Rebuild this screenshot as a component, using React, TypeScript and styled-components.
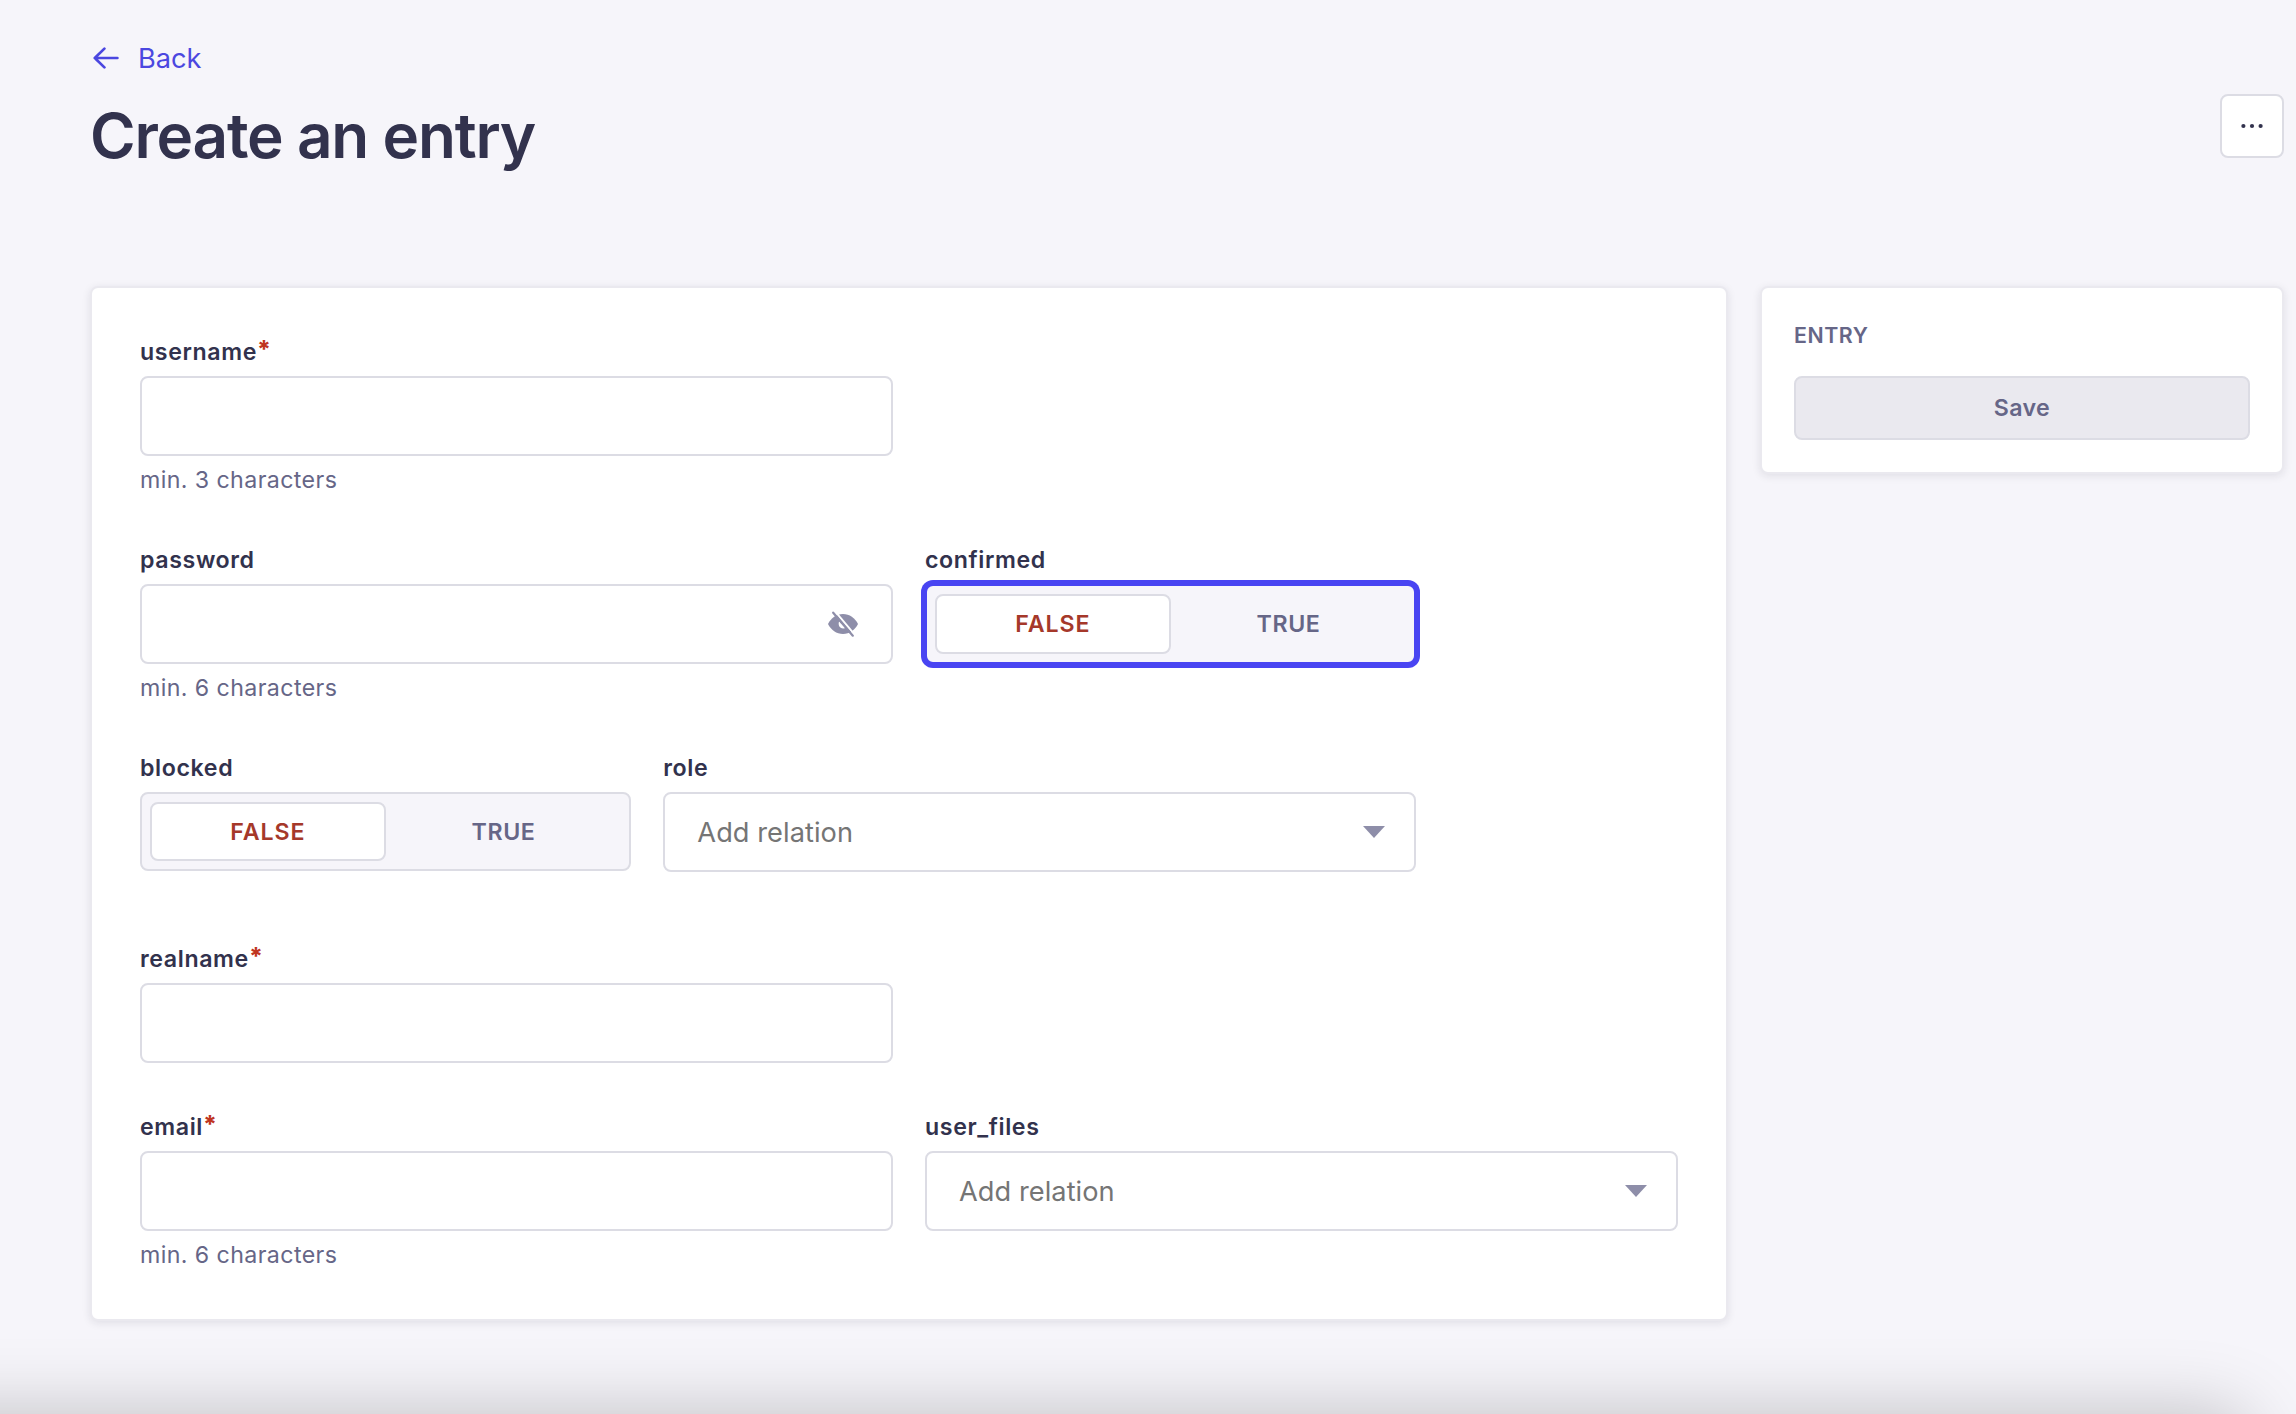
import React from "react";
import styled, { createGlobalStyle, css } from "styled-components";

const color = {
  page: "#f6f5fa",
  white: "#ffffff",
  line: "#dcdce4",
  soft: "#eae9ef",
  ink: "#32324d",
  muted: "#666687",
  icon: "#8e8ea9",
  placeholder: "#757575",
  primary: "#4945f2",
  link: "#4b47e0",
  danger: "#c0351f",
  dangerDeep: "#a5382a",
};

const GlobalStyle = createGlobalStyle`
  *, *::before, *::after { box-sizing: border-box; }
  body { margin: 0; background: ${color.page}; }
`;

const Page = styled.div`
  position: relative;
  width: 100%;
  height: 1414px;
  overflow: hidden;
  padding: 38px 12px 0 90px;
  background: ${color.page};
  color: ${color.ink};
  font-family: Inter, "Liberation Sans", sans-serif;
`;

const BackLink = styled.a`
  display: flex;
  align-items: center;
  width: fit-content;
  height: 40px;
  padding-left: 3px;
  gap: 19px;
  color: ${color.link};
  font-size: 27.2px;
  line-height: 40px;
  svg { display: block; }
  span { padding-top: 1px; }
`;

const TitleRow = styled.header`
  display: flex;
  align-items: flex-start;
  justify-content: space-between;
  height: 82px;
  margin-top: 16px;
`;

const Title = styled.h1`
  margin: 0;
  font-size: 62px;
  font-weight: 600;
  line-height: 84px;
  letter-spacing: -1.2px;
`;

const MoreButton = styled.button`
  display: flex;
  align-items: center;
  justify-content: center;
  width: 64px;
  height: 64px;
  padding: 0;
  border: 2px solid ${color.line};
  border-radius: 8px;
  background: ${color.white};
`;

const Content = styled.main`
  display: grid;
  grid-template-columns: 1638px 524px;
  justify-content: space-between;
  align-items: start;
  margin-top: 110px;
`;

const Card = styled.section`
  border: 2px solid ${color.soft};
  border-radius: 8px;
  background: ${color.white};
  box-shadow: 0 2px 8px rgba(33, 33, 52, 0.1);
`;

const FormCard = styled(Card)`
  display: grid;
  gap: 48px;
  padding: 48px;
`;

const Row = styled.div<{ $extra?: number }>`
  display: grid;
  grid-template-columns: repeat(12, 1fr);
  column-gap: 32px;
  align-items: start;
  padding-bottom: ${(p) => p.$extra ?? 0}px;
`;

const FieldBox = styled.div<{ $span: number }>`
  grid-column: span ${(p) => p.$span};
  display: flex;
  flex-direction: column;
  gap: 8px;
  min-width: 0;
`;

const Label = styled.label`
  display: flex;
  font-size: 23.2px;
  font-weight: 600;
  line-height: 32px;
  letter-spacing: 0.6px;
`;

const Asterisk = styled.span`
  color: ${color.danger};
  font-size: 24px;
  font-weight: 800;
  line-height: 28px;
`;

const Hint = styled.p`
  margin: 0;
  color: ${color.muted};
  font-size: 23.2px;
  line-height: 32px;
  letter-spacing: 0.4px;
`;

const Control = styled.div<{ $end?: number }>`
  display: flex;
  align-items: center;
  justify-content: space-between;
  height: 80px;
  padding: 0 ${(p) => p.$end ?? 29}px 0 32px;
  border: 2px solid ${color.line};
  border-radius: 8px;
  background: ${color.white};
  svg { display: block; flex: none; }
`;

const Placeholder = styled.span`
  color: ${color.placeholder};
  font-size: 27.2px;
  letter-spacing: 0.06px;
`;

const Toggle = styled.div<{ $focused?: boolean }>`
  display: grid;
  grid-template-columns: 1fr 1fr;
  height: 79px;
  padding: 8px;
  border: 2px solid ${color.line};
  border-radius: 8px;
  background: ${color.page};
  ${(p) =>
    p.$focused &&
    css`
      height: 80px;
      border-color: ${color.primary};
      box-shadow: 0 0 0 4px ${color.primary};
    `}
`;

const Option = styled.span<{ $selected?: boolean }>`
  display: flex;
  align-items: center;
  justify-content: center;
  border: 2px solid ${(p) => (p.$selected ? color.line : "transparent")};
  border-radius: 8px;
  background: ${(p) => (p.$selected ? color.white : "transparent")};
  color: ${(p) => (p.$selected ? color.dangerDeep : color.muted)};
  font-size: 23.2px;
  font-weight: 600;
  line-height: 32px;
  letter-spacing: ${(p) => (p.$selected ? 0.9 : 0.6)}px;
`;

const SideCard = styled(Card)`
  padding: 32px;
`;

const SideTitle = styled.h2`
  margin: 0 0 26px;
  color: ${color.muted};
  font-size: 21.3px;
  font-weight: 600;
  line-height: 30px;
  letter-spacing: 0.57px;
`;

const SaveButton = styled.button`
  display: block;
  width: 100%;
  height: 64px;
  padding: 0;
  border: 2px solid ${color.line};
  border-radius: 8px;
  background: ${color.soft};
  color: ${color.muted};
  font-family: inherit;
  font-size: 23.2px;
  font-weight: 600;
  line-height: 60px;
  letter-spacing: 0.4px;
`;

const WindowShade = styled.div`
  position: absolute;
  left: -200px;
  right: 50px;
  top: 1414px;
  height: 300px;
  border-radius: 20px;
  box-shadow: 0 0 75px rgba(0, 0, 0, 0.23);
  pointer-events: none;
`;

const ArrowLeft = () => (
  <svg width="26" height="22" viewBox="0 0 26 22" fill="none" stroke="currentColor" strokeWidth="2.7" strokeLinecap="round" strokeLinejoin="round">
    <path d="M24.400 11H1.800M11.400 1.600L1.800 11l9.600 9.400" />
  </svg>
);

const Dots = () => (
  <svg width="24" height="6" viewBox="0 0 24 6" fill={color.ink}>
    <circle cx="3.4" cy="3" r="2.1" />
    <circle cx="12" cy="3" r="2.1" />
    <circle cx="20.6" cy="3" r="2.1" />
  </svg>
);

const Caret = () => (
  <svg width="22" height="12" viewBox="0 0 22 12" fill={color.icon}>
    <path d="M0 0h22L11 12z" />
  </svg>
);

const EyeOff = () => (
  <svg width="32" height="26" viewBox="0 0 32 26" fill="none">
    <path d="M1 13C4 7 9.500 3 16 3s12 4 15 10c-3 6-8.500 10-15 10S4 19 1 13z" fill={color.icon} />
    <path d="M12.200 10.200c-1.500 3.300.3 7.300 4 7.300 1.200 0 2.200-.4 3-1.100l-3.200-3.600-2.200-.6z" fill={color.white} />
    <path d="M8.100 .4L28.300 24.300" stroke={color.white} strokeWidth="2" />
    <path d="M6.200 1.700L25.800 24.700" stroke={color.icon} strokeWidth="2.200" strokeLinecap="round" />
  </svg>
);

type FieldProps = {
  label: string;
  span?: number;
  required?: boolean;
  hint?: string;
  children?: React.ReactNode;
};

const Field = ({ label, span = 6, required, hint, children }: FieldProps) => (
  <FieldBox $span={span}>
    <Label>
      {label}
      {required && <Asterisk>*</Asterisk>}
    </Label>
    {children ?? <Control />}
    {hint && <Hint>{hint}</Hint>}
  </FieldBox>
);

const BooleanToggle = ({ focused }: { focused?: boolean }) => (
  <Toggle $focused={focused}>
    <Option $selected>FALSE</Option>
    <Option>TRUE</Option>
  </Toggle>
);

const RelationSelect = () => (
  <Control>
    <Placeholder>Add relation</Placeholder>
    <Caret />
  </Control>
);

export default function App() {
  return (
    <>
      <GlobalStyle />
      <Page>
        <BackLink>
          <ArrowLeft />
          <span>Back</span>
        </BackLink>
        <TitleRow>
          <Title>Create an entry</Title>
          <MoreButton aria-label="More actions">
            <Dots />
          </MoreButton>
        </TitleRow>
        <Content>
          <FormCard>
            <Row>
              <Field label="username" required hint="min. 3 characters" />
            </Row>
            <Row>
              <Field label="password" hint="min. 6 characters">
                <Control $end={32}>
                  <span />
                  <EyeOff />
                </Control>
              </Field>
              <Field label="confirmed" span={4}>
                <BooleanToggle focused />
              </Field>
            </Row>
            <Row $extra={23}>
              <Field label="blocked" span={4}>
                <BooleanToggle />
              </Field>
              <Field label="role">
                <RelationSelect />
              </Field>
            </Row>
            <Row>
              <Field label="realname" required />
            </Row>
            <Row>
              <Field label="email" required hint="min. 6 characters" />
              <Field label="user_files">
                <RelationSelect />
              </Field>
            </Row>
          </FormCard>
          <SideCard>
            <SideTitle>ENTRY</SideTitle>
            <SaveButton>Save</SaveButton>
          </SideCard>
        </Content>
        <WindowShade />
      </Page>
    </>
  );
}
